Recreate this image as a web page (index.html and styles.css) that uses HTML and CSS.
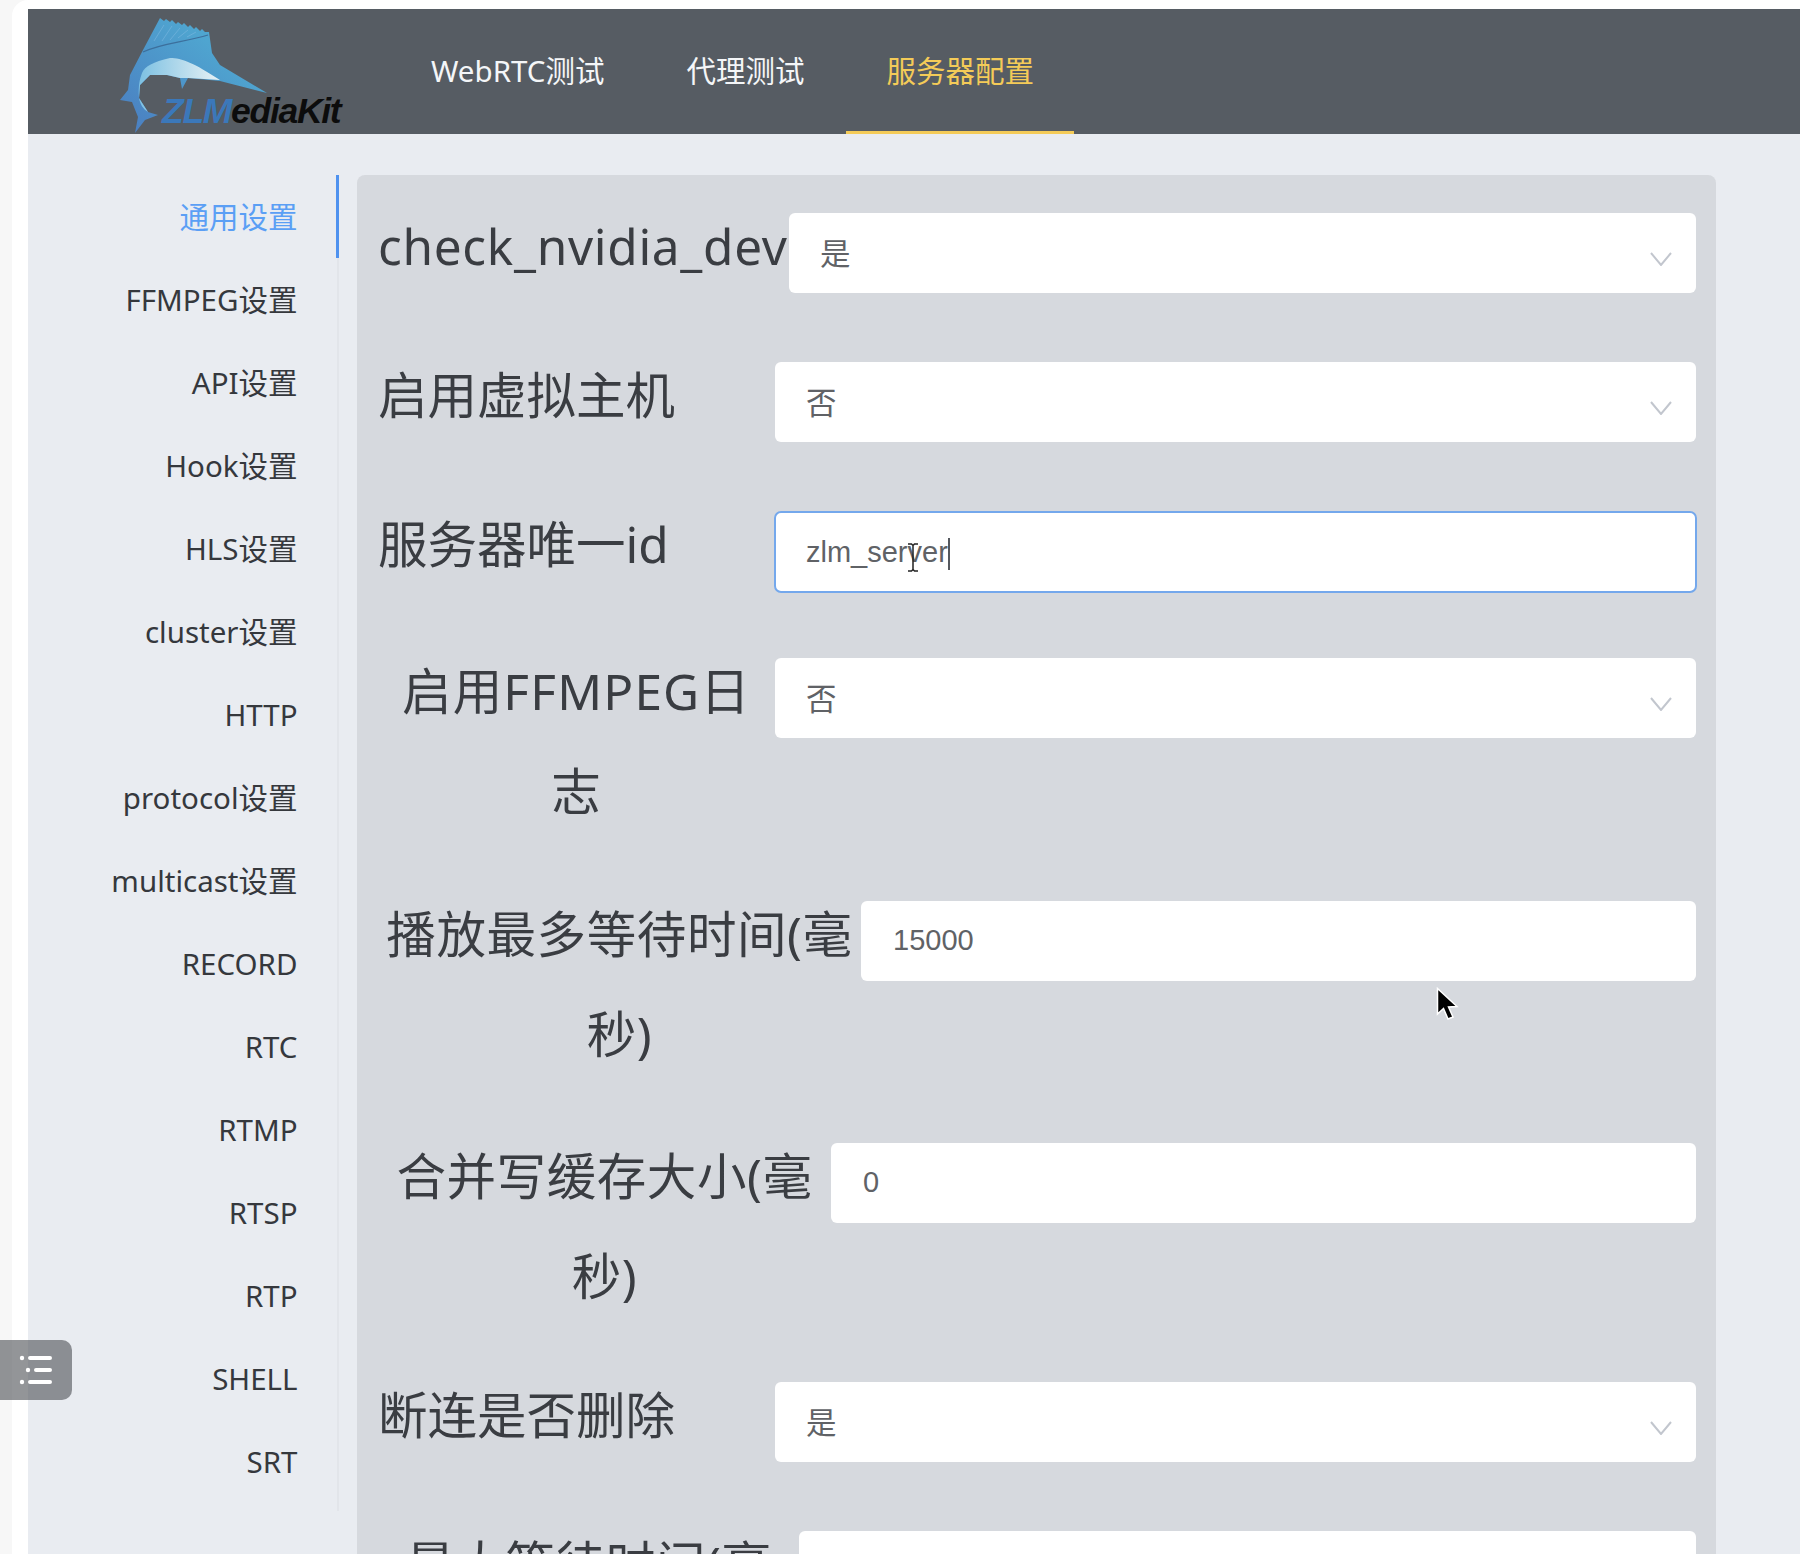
FILE: index.html
```html
<!DOCTYPE html>
<html lang="zh-CN">
<head>
<meta charset="utf-8">
<title>ZLMediaKit</title>
<link rel="stylesheet" href="styles.css">
</head>
<body>
<div class="window">
  <header class="topbar">
    <a class="logo">
      <svg class="logo-art" viewBox="0 0 222 117" width="222" height="117" xmlns="http://www.w3.org/2000/svg">
        <defs>
          <linearGradient id="fishBody" x1="0" y1="1" x2="1" y2="0">
            <stop offset="0" stop-color="#4a7cc0"/>
            <stop offset="0.7" stop-color="#4fa5d0"/>
            <stop offset="1" stop-color="#4fa9ce"/>
          </linearGradient>
          <linearGradient id="fishBelly" x1="0" y1="0" x2="1" y2="0">
            <stop offset="0" stop-color="#7cc0e2"/>
            <stop offset="1" stop-color="#e8f2f5"/>
          </linearGradient>
        </defs>
        <path fill="url(#fishBody)" d="M40 1 L44 4 L46 2 L50 5 L52 3 L56 7 L58 5 L62 8 L64 6 L68 10 L70 8 L74 12 L76 10 L80 14 L82 12 L85 15 L89 15 L92 36 L100 48 L147 76 L100 64 L68 61 L62 72 L60 61 L47 58 L30 58 L20 68 L19 81 L28 95 L38 98 L25 103 L15 116 L18 100 L12 85 L0 83 L8 73 L10 58 L23 33 Z"/>
        <path class="fish-hatch" d="M44 8 L34 24 M52 9 L42 24 M60 11 L50 23 M68 13 L58 21 M76 15 L67 20"/>
        <path class="fish-stripe" d="M23 35 C42 26 66 25 88 18"/>
        <path fill="url(#fishBelly)" d="M19 81 C18 68 20 62 22 56 C25 49 33 45 50 41 C62 41 74 46 100 63 L68 61 L60 61 L47 58 L30 58 L20 68 Z M19 81 L28 95 C23 92 20 87 19 81 Z"/>
        <text class="logo-text" x="42" y="106"><tspan class="logo-zlm">ZLM</tspan><tspan class="logo-kit">ediaKit</tspan></text>
      </svg>
    </a>
    <nav class="topnav">
      <a class="topnav-item">WebRTC测试</a>
      <a class="topnav-item">代理测试</a>
      <a class="topnav-item is-active">服务器配置</a>
    </nav>
  </header>

  <main class="content">
    <aside class="tabs">
      <a class="tab is-active">通用设置</a>
      <a class="tab">FFMPEG设置</a>
      <a class="tab">API设置</a>
      <a class="tab">Hook设置</a>
      <a class="tab">HLS设置</a>
      <a class="tab">cluster设置</a>
      <a class="tab">HTTP</a>
      <a class="tab">protocol设置</a>
      <a class="tab">multicast设置</a>
      <a class="tab">RECORD</a>
      <a class="tab">RTC</a>
      <a class="tab">RTMP</a>
      <a class="tab">RTSP</a>
      <a class="tab">RTP</a>
      <a class="tab">SHELL</a>
      <a class="tab">SRT</a>
    </aside>

    <section class="panel">
      <div class="row r1">
        <label class="label w-check">check_nvidia_dev</label>
        <div class="field">是<svg class="chev" viewBox="0 0 22 14" width="22" height="14"><path d="M1 1 L11 13 L21 1"/></svg></div>
      </div>
      <div class="row r2">
        <label class="label w-base left">启用虚拟主机</label>
        <div class="field">否<svg class="chev" viewBox="0 0 22 14" width="22" height="14"><path d="M1 1 L11 13 L21 1"/></svg></div>
      </div>
      <div class="row r3">
        <label class="label w-base left">服务器唯一id</label>
        <div class="field input is-focus">zlm_server<span class="caret"></span></div>
      </div>
      <div class="row r4">
        <label class="label w-base w-ffmpeg">启用FFMPEG日志</label>
        <div class="field">否<svg class="chev" viewBox="0 0 22 14" width="22" height="14"><path d="M1 1 L11 13 L21 1"/></svg></div>
      </div>
      <div class="row r5">
        <label class="label w-play">播放最多等待时间(毫秒)</label>
        <div class="field input">15000</div>
      </div>
      <div class="row r6">
        <label class="label w-merge">合并写缓存大小(毫秒)</label>
        <div class="field input">0</div>
      </div>
      <div class="row r7">
        <label class="label w-base left">断连是否删除</label>
        <div class="field">是<svg class="chev" viewBox="0 0 22 14" width="22" height="14"><path d="M1 1 L11 13 L21 1"/></svg></div>
      </div>
      <div class="row r8">
        <label class="label w-wait">最大等待时间(毫秒)</label>
        <div class="field input"></div>
      </div>
    </section>
  </main>
</div>

<button class="drawer-toggle" type="button" aria-label="menu">
  <svg viewBox="0 0 72 60" width="72" height="60">
    <path class="drawer-lines" d="M30 18 H50 M36 30 H50 M30 42 H50"/>
    <circle class="drawer-dot" cx="22" cy="18" r="2.200"/>
    <circle class="drawer-dot" cx="28" cy="30" r="2.200"/>
    <circle class="drawer-dot" cx="22" cy="42" r="2.200"/>
  </svg>
</button>

<svg class="cursor-beam" viewBox="0 0 12 29" width="12" height="29">
  <path d="M1 1 H4.500 L6 2.500 L7.500 1 H11 M6 2.500 V26.500 M1 28 H4.500 L6 26.500 L7.500 28 H11"/>
</svg>
<svg class="cursor-arrow" viewBox="0 0 24 36" width="24" height="36">
  <path d="M1.500 1.500 V27 L7.500 21.500 L12 32 L17 30 L12.500 20 L21 19.500 Z"/>
</svg>
</body>
</html>
```

FILE: styles.css
```css
* { box-sizing: border-box; }

html, body {
  margin: 0;
  height: 1554px;
  overflow: hidden;
}

body {
  position: relative;
  background: #f7f7f7;
  font-family: "Noto Sans", "Noto Sans CJK SC", sans-serif;
}

.window {
  margin-left: 12px;
  height: 1554px;
  padding: 9px 0 0 16px;
  background: #fff;
  border-top-left-radius: 16px;
  display: flex;
  flex-direction: column;
  overflow: hidden;
}

/* top bar */
.topbar {
  flex: none;
  height: 125px;
  padding-left: 92px;
  background: #565c63;
  display: flex;
}

.logo {
  flex: none;
  width: 222px;
  margin-top: 8px;
  margin-right: 49px;
}

.logo-art { display: block; overflow: visible; }

.fish-hatch {
  fill: none;
  stroke: #7cb7e0;
  stroke-width: 1;
  opacity: 0.6;
}

.fish-stripe {
  fill: none;
  stroke: #3c6f9c;
  stroke-width: 1.200;
}

.logo-text {
  font-family: "Liberation Sans", sans-serif;
  font-size: 35.500px;
  font-weight: 700;
  font-style: italic;
  letter-spacing: -1.300px;
}

.logo-zlm { fill: #3b78ba; }
.logo-kit { fill: #0c0c0c; }

.topnav { display: flex; gap: 2px; }

.topnav-item {
  padding: 0 40px;
  height: 125px;
  line-height: 123px;
  font-size: 29.500px;
  color: #f4f6f8;
  border-bottom: 3px solid transparent;
}

.topnav-item.is-active {
  color: #f4cb58;
  border-bottom-color: #f4cb58;
}

/* main */
.content {
  flex: 1;
  min-height: 0;
  background: #e9ecf1;
  padding: 41px 84px 0 0;
  display: flex;
  align-items: flex-start;
}

.tabs {
  flex: none;
  width: 311px;
  padding-bottom: 8px;
  border-right: 2px solid #e2e5ea;
  display: flex;
  flex-direction: column;
}

.tab {
  height: 83px;
  line-height: 84px;
  margin-right: -2px;
  padding-right: 38.500px;
  border-right: 3px solid transparent;
  text-align: right;
  font-size: 29.500px;
  color: #35383d;
}

.tab.is-active {
  color: #5b9ff5;
  border-right-color: #4f92ef;
}

.panel {
  flex: none;
  width: 1359px;
  margin-left: 18px;
  height: 1400px;
  padding: 21px 20px 0 21px;
  background: #d6d9de;
  border-radius: 8px 8px 0 0;
}

.row {
  display: flex;
  align-items: flex-start;
}

.r1, .r2 { margin-bottom: 49px; }
.r3 { margin-bottom: 47px; }
.r4 { margin-bottom: 43px; }
.r5 { margin-bottom: 42px; }
.r6 { margin-bottom: 39px; }
.r7 { margin-bottom: 49px; }

.label {
  flex: none;
  font-size: 49.500px;
  line-height: 100px;
  color: #3a3d42;
  text-align: center;
}

.label.left { text-align: left; }

.w-check { width: 411px; text-align: left; letter-spacing: 0.700px; }
.w-base { width: 397px; padding: 0 20px; }
.w-base.left { padding: 0; }
.w-ffmpeg { letter-spacing: 1.200px; }
.w-play { width: 483px; padding: 0 7px; letter-spacing: 0.600px; }
.w-merge { width: 453px; padding: 0 16px; letter-spacing: 0.600px; }
.w-wait { width: 421px; padding: 0 10px; letter-spacing: 0.600px; }

.field {
  flex: 1;
  position: relative;
  height: 80px;
  margin-top: 17px;
  padding-left: 31px;
  background: #fff;
  border-radius: 6px;
  font-size: 30.500px;
  line-height: 81px;
  color: #606266;
}

.field.input {
  font-family: "Liberation Sans", sans-serif;
  font-size: 29px;
  line-height: 78px;
  padding-left: 32px;
}

.field.is-focus {
  height: 82px;
  margin-left: -1px;
  margin-right: -1px;
  border: 2px solid #74a8ec;
  border-radius: 7px;
  padding-left: 30px;
  line-height: 78px;
}

.caret {
  display: inline-block;
  width: 2px;
  height: 32px;
  background: #55585e;
  vertical-align: middle;
}

.chev {
  position: absolute;
  right: 24px;
  top: 39px;
  fill: none;
  stroke: #c2c6ce;
  stroke-width: 2;
}

/* floating */
.drawer-toggle {
  position: absolute;
  left: 0;
  top: 1340px;
  width: 72px;
  height: 60px;
  padding: 0;
  border: 0;
  border-radius: 0 10px 10px 0;
  background: rgba(80, 84, 88, 0.62);
}

.drawer-toggle svg { display: block; }

.drawer-lines {
  fill: none;
  stroke: #fff;
  stroke-width: 4;
  stroke-linecap: round;
}

.drawer-dot { fill: #fff; }

.cursor-beam {
  position: absolute;
  left: 907px;
  top: 543px;
  fill: none;
  stroke: #222;
  stroke-width: 1.500;
}

.cursor-arrow {
  position: absolute;
  left: 1436px;
  top: 987px;
  fill: #000;
  stroke: #fff;
  stroke-width: 1.500;
}
```
